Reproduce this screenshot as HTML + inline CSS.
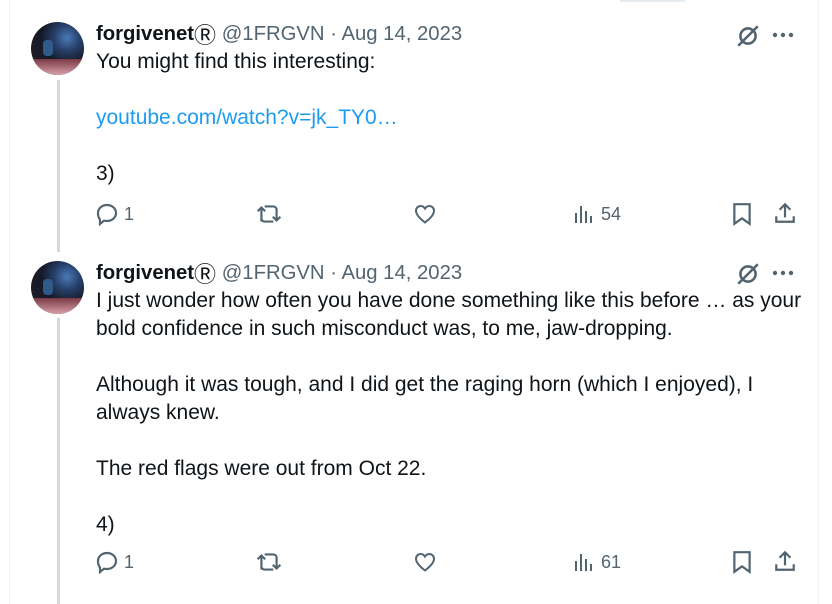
<!DOCTYPE html><html><head><style>
body{margin:0;width:832px;height:604px;background:#fff;position:relative;overflow:hidden;font-family:"Liberation Sans",Arial,sans-serif;color:#0f1419}
.a{position:absolute}
.line{position:absolute;left:57px;width:3px;background:#cfd9de}
.av{position:absolute;left:31px;width:53px;height:53px;border-radius:50%;overflow:hidden;background:radial-gradient(circle at 68% 30%,#4a7ab8 0,#27406a 25%,#151a28 50%,#2a1e24 100%)}
.av:after{content:"";position:absolute;left:0;right:0;bottom:0;height:16px;background:linear-gradient(#7a3a45,#d8a0a8)}
.av:before{content:"";position:absolute;left:12px;top:18px;width:10px;height:16px;background:#2f5a8a;border-radius:4px}
.hd{position:absolute;left:96px;font-size:20.3px;line-height:24px;height:24px;white-space:nowrap}
.hd b{font-weight:bold}.hd span{color:#536471}
.hd i{font-style:normal;display:inline-block;line-height:20px;vertical-align:top;margin-top:1px;color:#0f1419;font-weight:normal;position:relative;top:3px;font-size:22px}
.tx{position:absolute;left:96px;font-size:21px;line-height:28px;width:720px}
.lk{color:#1d9bf0}
.ic{position:absolute;color:#536471;font-size:18px}
svg{display:block}
</style></head><body>
<div class="a" style="left:9px;top:0;width:1px;height:604px;background:#eff3f4"></div>
<div class="a" style="left:818px;top:0;width:1px;height:604px;background:#eff3f4"></div>
<div class="a" style="left:620px;top:0;width:65px;height:2px;background:#e6ecf0"></div>

<div class="av" style="top:22px"></div>
<div class="line" style="top:80px;height:172px"></div>
<div class="hd" style="top:22px"><b>forgivenet<i>Ⓡ</i></b> <span>@1FRGVN · Aug 14, 2023</span></div>
<div class="tx" style="top:48px">You might find this interesting:<br><br><span class="lk">youtube.com/watch?v=jk_TY0…</span><br><br>3)</div>

<div class="av" style="top:261px"></div>
<div class="line" style="top:318px;height:286px"></div>
<div class="hd" style="top:261px"><b>forgivenet<i>Ⓡ</i></b> <span>@1FRGVN · Aug 14, 2023</span></div>
<div class="tx" style="top:287px">I just wonder how often you have done something like this before … as your bold confidence in such misconduct was, to me, jaw-dropping.<br><br>Although it was tough, and I did get the raging horn (which I enjoyed), I always knew.<br><br>The red flags were out from Oct 22.<br><br>4)</div>

<svg class="a" style="left:735px;top:23px" width="26" height="26" viewBox="0 0 24 24" fill="none" stroke="#536471" stroke-width="2.4"><circle cx="12" cy="12" r="7"/><line x1="3" y1="21" x2="21" y2="3"/></svg>
<svg class="a" style="left:772px;top:32px" width="22" height="6"><circle cx="3" cy="3" r="2.2" fill="#536471"/><circle cx="11" cy="3" r="2.2" fill="#536471"/><circle cx="19" cy="3" r="2.2" fill="#536471"/></svg>
<svg class="a" style="left:735px;top:261px" width="26" height="26" viewBox="0 0 24 24" fill="none" stroke="#536471" stroke-width="2.4"><circle cx="12" cy="12" r="7"/><line x1="3" y1="21" x2="21" y2="3"/></svg>
<svg class="a" style="left:772px;top:270px" width="22" height="6"><circle cx="3" cy="3" r="2.2" fill="#536471"/><circle cx="11" cy="3" r="2.2" fill="#536471"/><circle cx="19" cy="3" r="2.2" fill="#536471"/></svg>

<script>
function row(y,n){
var s='<svg class="a" style="left:95px;top:'+(y-12)+'px" width="24" height="24" viewBox="0 0 24 24" fill="none" stroke="#536471" stroke-width="2.2"><path d="M12 3c5 0 9 3.5 9 8s-4 8-9 8c-1 0-2 0-3-.3L5 22v-4.5C3.7 16 3 13.7 3 11c0-4.5 4-8 9-8z"/></svg>'
+'<div class="ic" style="left:124px;top:'+(y-10)+'px">1</div>'
+'<svg class="a" style="left:256px;top:'+(y-12)+'px" width="26" height="24" viewBox="0 0 24 22" fill="none" stroke="#536471" stroke-width="2"><path d="M5 18V5M1.5 8.5L5 5l3.5 3.5M8 4h8a3 3 0 0 1 3 3v10M15.5 13.5L19 17l3.5-3.5M16 18H8a3 3 0 0 1-3-3"/></svg>'
+'<svg class="a" style="left:413px;top:'+(y-12)+'px" width="24" height="24" viewBox="0 0 24 24" fill="none" stroke="#536471" stroke-width="2"><path d="M12 20.5C6 16 3 12.5 3 8.8 3 6 5.2 4 7.7 4c1.8 0 3.3 1 4.3 2.6C13 5 14.5 4 16.3 4 18.8 4 21 6 21 8.8c0 3.7-3 7.2-9 11.7z"/></svg>'
+'<svg class="a" style="left:574px;top:'+(y-10)+'px" width="20" height="20" viewBox="0 0 20 20" fill="#536471"><rect x="1" y="9" width="2" height="10"/><rect x="6" y="2" width="2" height="17"/><rect x="11" y="7" width="2" height="12"/><rect x="16" y="12" width="2" height="7"/></svg>'
+'<div class="ic" style="left:601px;top:'+(y-10)+'px">'+n+'</div>'
+'<svg class="a" style="left:731px;top:'+(y-12)+'px" width="22" height="24" viewBox="0 0 20 22" fill="none" stroke="#536471" stroke-width="2"><path d="M3 2h14v18l-7-5-7 5z"/></svg>'
+'<svg class="a" style="left:773px;top:'+(y-13)+'px" width="24" height="24" viewBox="0 0 22 22" fill="none" stroke="#536471" stroke-width="2"><path d="M11 15V3M6 8l5-5 5 5M3 14v5h16v-5"/></svg>';
document.body.insertAdjacentHTML('beforeend',s);}
row(214,'54');row(562,'61');
</script>
</body></html>
